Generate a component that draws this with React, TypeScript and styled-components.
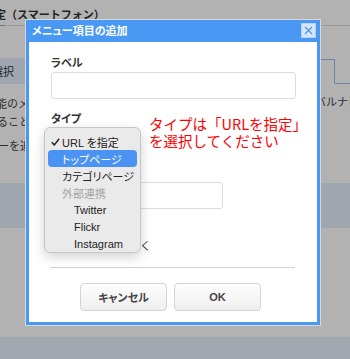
import React from 'react'
import styled, { createGlobalStyle } from 'styled-components'

const GlobalStyle = createGlobalStyle`
  html, body {
    margin: 0;
    padding: 0;
  }
  body {
    font-family: "Liberation Sans", "Noto Sans CJK JP", sans-serif;
    background: #fff;
    color: #333;
  }
  * {
    box-sizing: border-box;
  }
`

export default function App() {
  return (
    <>
      <GlobalStyle />
      <Page>
        <TitleText>設定（スマートフォン）</TitleText>
        <Rule>
          <RuleSegment $accent />
          <RuleSegment />
        </Rule>

        <TabRow>
          <FilledTab>項目を選択</FilledTab>
          <TabSpacer />
          <ActiveTab />
        </TabRow>

        <TextRow $top={11}>
          <Line $indent={-15}>機能のメニュー</Line>
          <RightText>グローバルナビ</RightText>
        </TextRow>
        <TextRow>
          <Line $indent={-14}>することができます</Line>
        </TextRow>
        <TextRow $top={6}>
          <Line $indent={-24}>ニューを追加</Line>
        </TextRow>

        <Band />
        <PageSpacer />
        <Footer />

        <Overlay />

        <Modal>
          <Frame>
            <Header>
              <HeaderTitle>メニュー項目の追加</HeaderTitle>
              <CloseButton aria-label="閉じる">
                <svg width="9" height="9" viewBox="0 0 9 9">
                  <path d="M1 1 L8 8 M8 1 L1 8" stroke="#4f96ee" strokeWidth="1.3" fill="none" />
                </svg>
              </CloseButton>
            </Header>

            <Body>
              <Field>
                <FieldLabel>ラベル</FieldLabel>
                <TextInput />
              </Field>
              <Field $top={13}>
                <FieldLabel>タイプ</FieldLabel>
                <SelectBox $width={86} />
              </Field>
              <Field $top={12}>
                <FieldLabel>URL</FieldLabel>
                <TextInput $width={172} />
              </Field>
              <CheckRow>
                <CheckBox />
                <span>新しいタブで開く</span>
              </CheckRow>
              <Divider />
              <ButtonRow>
                <Button>キャンセル</Button>
                <Button>OK</Button>
              </ButtonRow>

              <Menu>
                <MenuItem $pad={3}>
                  <svg width="9" height="8" viewBox="0 0 9 8">
                    <path d="M0.8 4.2 L3.3 6.9 L8.2 0.8" stroke="#222" strokeWidth="1.5" fill="none" />
                  </svg>
                  <ItemText>URL を指定</ItemText>
                </MenuItem>
                <MenuItem $pad={14} $active>トップページ</MenuItem>
                <MenuItem $pad={14}>カテゴリページ</MenuItem>
                <MenuItem $pad={14} $muted>外部連携</MenuItem>
                <MenuItem $pad={26}>Twitter</MenuItem>
                <MenuItem $pad={26}>Flickr</MenuItem>
                <MenuItem $pad={26}>Instagram</MenuItem>
              </Menu>

              <Note>
                タイプは「URLを指定」
                <br />
                を選択してください
              </Note>
            </Body>
          </Frame>
        </Modal>
      </Page>
    </>
  )
}

const Page = styled.div`
  position: relative;
  width: 350px;
  height: 359px;
  overflow: hidden;
  display: flex;
  flex-direction: column;
  background: #fff;
`

const TitleText = styled.div`
  margin: 8px 0 3px -16px;
  font-size: 11px;
  line-height: 14px;
  font-weight: bold;
  color: #333;
  white-space: nowrap;
`

const Rule = styled.div`
  display: flex;
  height: 1px;
`

const RuleSegment = styled.div<{ $accent?: boolean }>`
  flex: ${p => (p.$accent ? '0 0 5px' : '1')};
  background: ${p => (p.$accent ? '#86a9d6' : '#dcdcdc')};
`

const TabRow = styled.div`
  display: flex;
  align-items: flex-end;
  height: 26px;
  margin-top: 32px;
  border-bottom: 1px solid #9dbfe8;
`

const FilledTab = styled.div`
  flex: 0 0 100px;
  height: 26px;
  margin-left: -41px;
  margin-bottom: -1px;
  display: flex;
  align-items: center;
  background: #e5eefb;
  font-size: 11px;
  color: #333;
  white-space: nowrap;
`

const TabSpacer = styled.div`
  flex: 1;
`

const ActiveTab = styled.div`
  flex: 0 0 100px;
  height: 25px;
  margin-right: 15px;
  margin-bottom: -1px;
  border: 1px solid #9dbfe8;
  border-bottom: 1px solid #fff;
  background: #fff;
`

const TextRow = styled.div<{ $top?: number }>`
  display: flex;
  justify-content: space-between;
  margin-top: ${p => p.$top ?? 0}px;
  font-size: 11px;
  line-height: 18px;
  color: #444;
  white-space: nowrap;
`

const Line = styled.div<{ $indent: number }>`
  margin-left: ${p => p.$indent}px;
`

const RightText = styled.div`
  margin-right: -9px;
  margin-top: -2px;
`

const Band = styled.div`
  height: 45px;
  margin-top: 28px;
  background: #e6eef9;
`

const PageSpacer = styled.div`
  flex: 1;
`

const Footer = styled.div`
  height: 22px;
  background: #e9f1fb;
`

const Overlay = styled.div`
  position: absolute;
  inset: 0;
  background: rgba(0, 0, 0, 0.3);
`

const Modal = styled.div`
  position: absolute;
  left: 25px;
  top: 19px;
  width: 296px;
  border: 1px solid #d8d8d8;
`

const Frame = styled.div`
  border: 3px solid #4898f4;
  border-top-width: 1px;
  background: #fff;
`

const Header = styled.div`
  display: flex;
  align-items: center;
  justify-content: space-between;
  height: 21px;
  padding: 0 1px 2px 3px;
  background: #4898f4;
`

const HeaderTitle = styled.div`
  font-size: 11px;
  font-weight: bold;
  color: #fff;
  line-height: 14px;
  font-feature-settings: "palt";
`

const CloseButton = styled.div`
  width: 15px;
  height: 15px;
  display: flex;
  align-items: center;
  justify-content: center;
  background: #d6e6fa;
  border: 1px solid #b7d2f4;
`

const Body = styled.div`
  position: relative;
  display: flex;
  flex-direction: column;
  padding: 14px 21px 11px 22px;
`

const Field = styled.div<{ $top?: number }>`
  display: flex;
  flex-direction: column;
  gap: 2px;
  margin-top: ${p => p.$top ?? 0}px;
`

const FieldLabel = styled.div`
  font-size: 11px;
  line-height: 14px;
  font-weight: bold;
  color: #333;
  font-feature-settings: "palt";
`

const TextInput = styled.div<{ $width?: number }>`
  width: ${p => (p.$width ? `${p.$width}px` : '100%')};
  height: 27px;
  border: 1px solid #dcdcdc;
  border-radius: 3px;
  background: #fff;
`

const SelectBox = styled.div<{ $width: number }>`
  width: ${p => p.$width}px;
  height: 26px;
  border: 1px solid #ccc;
  border-radius: 4px;
  background: linear-gradient(#fff, #f2f2f2);
`

const CheckRow = styled.div`
  display: flex;
  align-items: center;
  gap: 2px;
  margin-top: 29px;
  height: 14px;
  font-size: 11px;
  color: #333;
`

const CheckBox = styled.div`
  width: 10px;
  height: 10px;
  border: 1px solid #aaa;
  border-radius: 2px;
`

const Divider = styled.div`
  height: 1px;
  margin: 15px 1px 0 -1px;
  background: #d2d2d2;
`

const ButtonRow = styled.div`
  display: flex;
  justify-content: center;
  gap: 7px;
  margin-top: 15px;
  padding-right: 6px;
`

const Button = styled.div`
  width: 87px;
  height: 28px;
  display: flex;
  align-items: center;
  justify-content: center;
  border: 1px solid #d4d4d4;
  border-radius: 4px;
  background: linear-gradient(#fdfdfd, #efefef);
  font-size: 11px;
  font-weight: bold;
  color: #444;
  font-feature-settings: "palt";
`

const Menu = styled.div`
  position: absolute;
  left: 15px;
  top: 85px;
  width: 97px;
  height: 126px;
  padding: 5px 3px 2px;
  background: #eaeaea;
  border: 1px solid #c6c6c6;
  border-radius: 6px;
  box-shadow: 0 4px 12px rgba(0, 0, 0, 0.18);
`

const MenuItem = styled.div<{ $pad: number; $active?: boolean; $muted?: boolean }>`
  display: flex;
  align-items: center;
  height: 17px;
  padding-left: ${p => p.$pad}px;
  border-radius: 4px;
  font-size: 11px;
  white-space: nowrap;
  font-feature-settings: "palt";
  background: ${p => (p.$active ? '#4b93f2' : 'transparent')};
  color: ${p => (p.$active ? '#fff' : p.$muted ? '#a3a3a3' : '#222')};
`

const ItemText = styled.span`
  margin-left: 2px;
`

const Note = styled.div`
  position: absolute;
  left: 120px;
  top: 74px;
  font-family: "Noto Sans CJK JP", sans-serif;
  font-size: 14.5px;
  line-height: 16.5px;
  color: #f00;
  white-space: nowrap;
`
